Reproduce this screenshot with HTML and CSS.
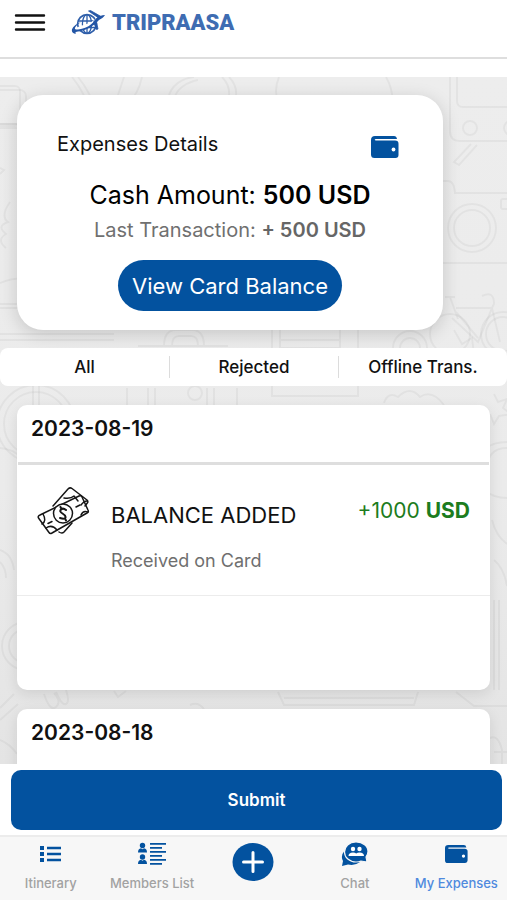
FILE: index.html
```html
<!DOCTYPE html>
<html lang="en">
<head>
<meta charset="utf-8">
<meta name="viewport" content="width=device-width, initial-scale=1">
<title>Tripraasa – My Expenses</title>
<link rel="stylesheet" href="styles.css">
</head>
<body>
<div class="app">
  <header class="topbar">
    <button class="menu" type="button" aria-label="Menu">
      <svg width="32" height="20" viewBox="0 0 32 20" fill="none" stroke="#111" stroke-width="2.4" stroke-linecap="round"><path d="M2 2.500h28M2 9.500h28M2 16.500h28"/></svg>
    </button>
    <a class="brand" href="#">
      <svg width="36" height="28" viewBox="0 0 36 28" fill="none" stroke="#2f5faa">
        <circle cx="17" cy="15" r="9.4" stroke-width="1.7"/>
        <ellipse cx="17" cy="15" rx="4.6" ry="9.4" stroke-width="1.3"/>
        <path d="M17 6v18M8 12h18M8 18.500h18" stroke-width="1.3"/>
        <path d="M5 22C9 17 20 19 28 10" stroke="#fff" stroke-width="3.500"/>
        <path d="M6 25C-1 24 1 17 11 13C4 18 3 21 8 20.500C16 20 23 15 26 9.500C28 7.500 32 6 35 6C34 8 31 10 29 11C23 18 14 22 8 22.500Q4 23 6 25Z" fill="#2456a6" stroke="none"/>
        <path d="M28 8.500L18.500 2L20.500 1.500L31 7.500ZM26 10.500L28 20L26.500 20.500L23.500 13Z" fill="#2456a6" stroke="#2456a6" stroke-width=".8"/>
      </svg>
      <span>TRIPRAASA</span>
    </a>
  </header>

  <main class="content">
    <svg class="doodles" viewBox="0 77 507 687" preserveAspectRatio="xMidYMin slice" aria-hidden="true">
      <rect x="-12" y="86" width="32" height="40" rx="5"/><rect x="-18" y="90" width="44" height="34" rx="6"/>
      <path d="M72 77Q84 92 90 110M78 77Q90 92 96 110M124 77l-8 24M142 77q-4 18-14 26"/>
      <path d="M168 100c2-16 16-22 26-23M174 100c2-12 14-18 24-20M222 77q10 10 6 24M229 77q10 10 6 24"/>
      <path d="M279 77q-6 14 0 28M386 77q8 14 6 28"/>
      <path d="M450 77v54q0 10 10 10h47M457 77v24q0 6 6 6h44"/><circle cx="470" cy="128" r="7"/><circle cx="511" cy="128" r="7"/>
      <path d="M471 144l-17 18 5 3 18-20M430 181h18q6 0 7 12h52M440 263h67"/>
      <circle cx="472" cy="228" r="24"/><circle cx="472" cy="228" r="18"/><rect x="501" y="199" width="14" height="10" rx="2"/>
      <path d="M445 297h10M450 297l8 22M482 296q12-6 12 8l-3 6M456 308h36M452 318l26 24 14-34 8 34M456 312l22 26"/>
      <circle cx="450" cy="334" r="20"/><circle cx="503" cy="334" r="22"/><circle cx="503" cy="334" r="17"/>
      <path d="M0 124h18M0 128h18M0 168l4 2-4 4M10 202q-10 14-2 20-12 4-2 12-10 6 0 14M22 210q-6 10 0 20M0 283q14-6 30-4M0 304h20M0 308h20M0 334h114M0 340h114"/>
      <path d="M164 346q0-16 12-16h16q12 0 12 16M172 346q0-10 7-10h12q7 0 7 10M138 346h90"/>
      <path d="M272 330v66h86v-66M280 340h60M280 330v18h60v-18"/><circle cx="410" cy="348" r="17"/><circle cx="410" cy="348" r="10"/><path d="M454 330l8 14 10-6 2 16"/>
      <circle cx="36" cy="424" r="39"/><circle cx="36" cy="424" r="32"/><path d="M33 384v80M39 384v80"/>
      <path d="M127 388v17M148 388v17M155 388v17M207 388v17M214 388v17M237 388v17"/><circle cx="195" cy="393" r="7"/>
      <path d="M384 403q4-12 14-6 12-12 22 0 12-8 24 8"/>
      <path d="M494 394l4 8 9-3-4 9 8 6-12 2-5 8-4-10M507 442q-28 0-28 26 0 30 28 30M507 448q-20 0-20 22M492 520q4 16 15 24"/>
      <path d="M0 448q20 2 26 18M0 550q12 4 14 20M0 562q6 6 6 16M494 560q10 8 13 26M499 600v90M494 600v90"/>
      <circle cx="26" cy="646" r="24"/><circle cx="26" cy="646" r="17"/><path d="M44 694q6 18 12 13t-2-14M56 692q6 14 10 12t0-14M0 708l14-14M0 720l18-16M114 691l4 6 8-6"/>
      <path d="M278 692l6 13h130l4-13M284 698h130M456 692l18 14h33M190 705q8-4 14 4M0 740q10 4 17 14M490 738q8-4 12 12v14M494 752h13"/>
    </svg>

    <section class="summary">
      <div class="summary-head">
        <h1>Expenses Details</h1>
        <svg width="28" height="22" viewBox="0 0 28 22"><path fill="#03529f" d="M4 0h19q2.500 0 3 3H5q-1.300 0-1.300.8T5 4.600h19q3.500 0 3.500 3.200V19q0 3-3 3H3.500Q0 22 0 18.500V4Q0 0 4 0Z"/><circle cx="22.500" cy="13.500" r="1.900" fill="#fff"/></svg>
      </div>
      <p class="amount">Cash Amount: <strong>500 USD</strong></p>
      <p class="last">Last Transaction: <strong>+ 500 USD</strong></p>
      <button class="pill" type="button">View Card Balance</button>
    </section>

    <div class="tabs">
      <button type="button">All</button>
      <button type="button">Rejected</button>
      <button type="button">Offline Trans.</button>
    </div>

    <section class="day">
      <h2>2023-08-19</h2>
      <article class="entry">
        <svg class="cash" width="54" height="50" viewBox="0 0 54 50" fill="none" stroke="#161616" stroke-width="1.500" stroke-linecap="round" stroke-linejoin="round">
          <path d="M16 20L31 3q2-2 4-.5L50 14q1.500 1.500.3 3L48 20M22 46q3 2 5 0l8-9"/>
          <path d="M27 12q7 1 10-2l4 5M44 19q3-4 6-4"/>
          <path d="M3 29L42 10q2-1 3 1l6 13q1 2-1 3L15 47q-2 1-3-.5L1.500 32q-1-2 1.500-3Z"/>
          <path d="M6 28q4 7-1 10M20 44q-5-6-11-2M51 26q-5-2-7 3"/>
          <circle cx="26" cy="27.500" r="9.500" fill="#fff"/>
          <path d="M29 24q-3-2.500-5-.5t1.500 4 3 4-5.500.5M23.500 21l1 2M28 32.500l1 2" stroke-width="2"/>
          <path d="M11 37.500l4-2M39 21l4-2"/>
        </svg>
        <div class="entry-text">
          <h3>BALANCE ADDED</h3>
          <p>Received on Card</p>
        </div>
        <p class="credit">+1000 <strong>USD</strong></p>
      </article>
    </section>

    <section class="day">
      <h2>2023-08-18</h2>
    </section>
  </main>

  <div class="submit-bar"><button type="submit">Submit</button></div>

  <nav class="tabbar">
    <a href="#">
      <svg width="22" height="24" viewBox="0 0 22 24" fill="#03529f"><path d="M0 4h4v4H0zM0 10h4v4H0zM0 16h4v4H0zM7 4.700h14v2.500H7zM7 10.700h14v2.500H7zM7 16.700h14v2.500H7z"/></svg>
      <span>Itinerary</span>
    </a>
    <a href="#">
      <svg width="28" height="24" viewBox="0 0 28 24" fill="#03529f"><circle cx="4.500" cy="3.500" r="2.700"/><path d="M0 10.500q0-4 3-4.300l1.500 1 1.500-1q3 .3 3 4.300z"/><circle cx="4.500" cy="15" r="2.700"/><path d="M0 22q0-4 3-4.300l1.500 1 1.500-1q3 .3 3 4.300z"/><path d="M12 1h16v1.700H12zM12 5h12v1.700H12zM12 9h16v1.700H12zM12 13h12v1.700H12zM12 17h16v1.700H12zM12 21h12v1.700H12z"/></svg>
      <span>Members List</span>
    </a>
    <a href="#" class="add" aria-label="Add">
      <svg width="42" height="40" viewBox="0 0 42 40"><ellipse cx="21" cy="20" rx="20.500" ry="19" fill="#03529f"/><path d="M11.500 20h19M21 10.500v19" stroke="#fff" stroke-width="3" stroke-linecap="round"/></svg>
    </a>
    <a href="#">
      <svg width="28" height="24" viewBox="0 0 28 24"><path d="M4 8Q-1 14 2 19L1 24l6-1.500q7 1.500 12-2.500z" fill="#03529f"/><path d="M15 0C8 0 3.500 4.500 3.500 10S8.500 20 15 20q3 0 5-1l6 1-1-5q2-3 2-5.500C27 4 22 0 15 0Z" fill="#03529f" stroke="#f7f7f7" stroke-width="1.200"/><circle cx="12" cy="7" r="2.200" fill="#fff"/><circle cx="18.500" cy="7" r="2.200" fill="#fff"/><path d="M7.500 14q0-3.500 4.500-3.500 2 0 3.200 1 1.300-1 3.300-1 4.500 0 4.500 3.500z" fill="#fff"/></svg>
      <span>Chat</span>
    </a>
    <a href="#" class="current">
      <svg width="23" height="24" viewBox="0 0 28 28"><path fill="#03529f" d="M4 3h19q2.500 0 3 3H5q-1.300 0-1.300.8T5 7.600h19q3.500 0 3.500 3.200V22q0 3-3 3H3.500Q0 25 0 21.500V7Q0 3 4 3Z"/><circle cx="22.500" cy="16.500" r="2" fill="#fff"/></svg>
      <span>My Expenses</span>
    </a>
  </nav>
</div>
</body>
</html>
```

FILE: styles.css
```css
* { box-sizing: border-box; }
body, h1, h2, h3, p { margin: 0; }
body { font-family: Inter, "Liberation Sans", sans-serif; color: #111; background: #fff; }
button { font: inherit; color: inherit; border: 0; background: none; padding: 0; cursor: pointer; }
a { color: inherit; text-decoration: none; }
svg { display: block; flex: none; }

.app { display: flex; flex-direction: column; height: 100vh; }

.topbar {
  display: flex;
  align-items: center;
  gap: 24px;
  height: 59px;
  padding: 2px 14px 14px;
  border-bottom: 2px solid #dedede;
}
.brand { display: flex; align-items: center; gap: 6px; font: 900 22px/28px Roboto, sans-serif; color: #3e6cb2; }

.content {
  position: relative;
  flex: 1;
  min-height: 0;
  margin-top: 18px;
  padding-top: 18px;
  overflow-y: auto;
  scrollbar-width: none;
  background: linear-gradient(#ededed, #ebebeb 60%, #e4e4e4);
}
.doodles { position: absolute; inset: 0; width: 100%; height: 100%; fill: none; stroke: rgba(0, 0, 0, .04); stroke-width: 2; }

.summary {
  position: relative;
  display: flex;
  flex-direction: column;
  align-items: center;
  margin: 0 64px 18px 17px;
  padding: 35px 40px 19px;
  border-radius: 26px;
  background: #fff;
  box-shadow: 0 4px 18px rgba(0, 0, 0, .16);
}
.summary-head { display: flex; justify-content: space-between; align-items: center; align-self: stretch; margin-bottom: 19px; padding-right: 4px; }
.summary-head svg { margin-top: 6px; }
h1 { font-size: 20px; font-weight: 400; line-height: 28px; }
.amount { font-size: 25px; line-height: 36px; color: #000; }
.last { margin-bottom: 13px; font-size: 20px; line-height: 34px; color: #707070; }
.amount strong, .last strong { font-weight: 600; }
.last strong { color: #666; }
.pill { height: 51px; padding: 0 14px; border-radius: 26px; background: #03529f; color: #fff; font-size: 22px; }

.tabs { position: relative; display: grid; grid-template-columns: repeat(3, 1fr); height: 38px; padding: 8px 0; margin-bottom: 19px; border-radius: 8px; background: #fff; }
.tabs button { font-size: 17px; font-weight: 500; line-height: 20px; }
.tabs button + button { border-left: 1px solid #dcdcdc; }

.day { position: relative; min-height: 285px; margin: 0 17px 19px; border-radius: 10px; background: #fff; box-shadow: 0 4px 14px rgba(0, 0, 0, .1); }
h2 { margin: 0 1px; padding: 10px 13px 19px; border-bottom: 3px solid #dedede; font-size: 21px; font-weight: 600; line-height: 28px; }
.entry { display: flex; padding: 21px 20px 20px; border-bottom: 1px solid #ececec; }
.entry-text { flex: 1; margin-left: 20px; padding-top: 13px; }
h3 { font-size: 22px; font-weight: 400; line-height: 32px; }
.entry-text p { margin-top: 16px; font-size: 18px; line-height: 28px; color: #6f6f6f; }
.credit { padding-top: 11px; font-size: 21px; line-height: 28px; color: #1c7c20; }

.submit-bar { padding: 6px 5px 5px 11px; }
.submit-bar button { width: 100%; height: 60px; border-radius: 10px; background: #03529f; color: #fff; font-size: 17px; font-weight: 600; }

.tabbar { display: grid; grid-template-columns: repeat(5, 1fr); height: 65px; padding: 5px 0 0; border-top: 2px solid #ececec; background: #f7f7f7; }
.tabbar a { display: flex; flex-direction: column; align-items: center; gap: 8px; font-size: 13px; font-weight: 500; line-height: 18px; color: #a2a2a2; white-space: nowrap; }
.tabbar .current { color: #4f8ade; }
```
